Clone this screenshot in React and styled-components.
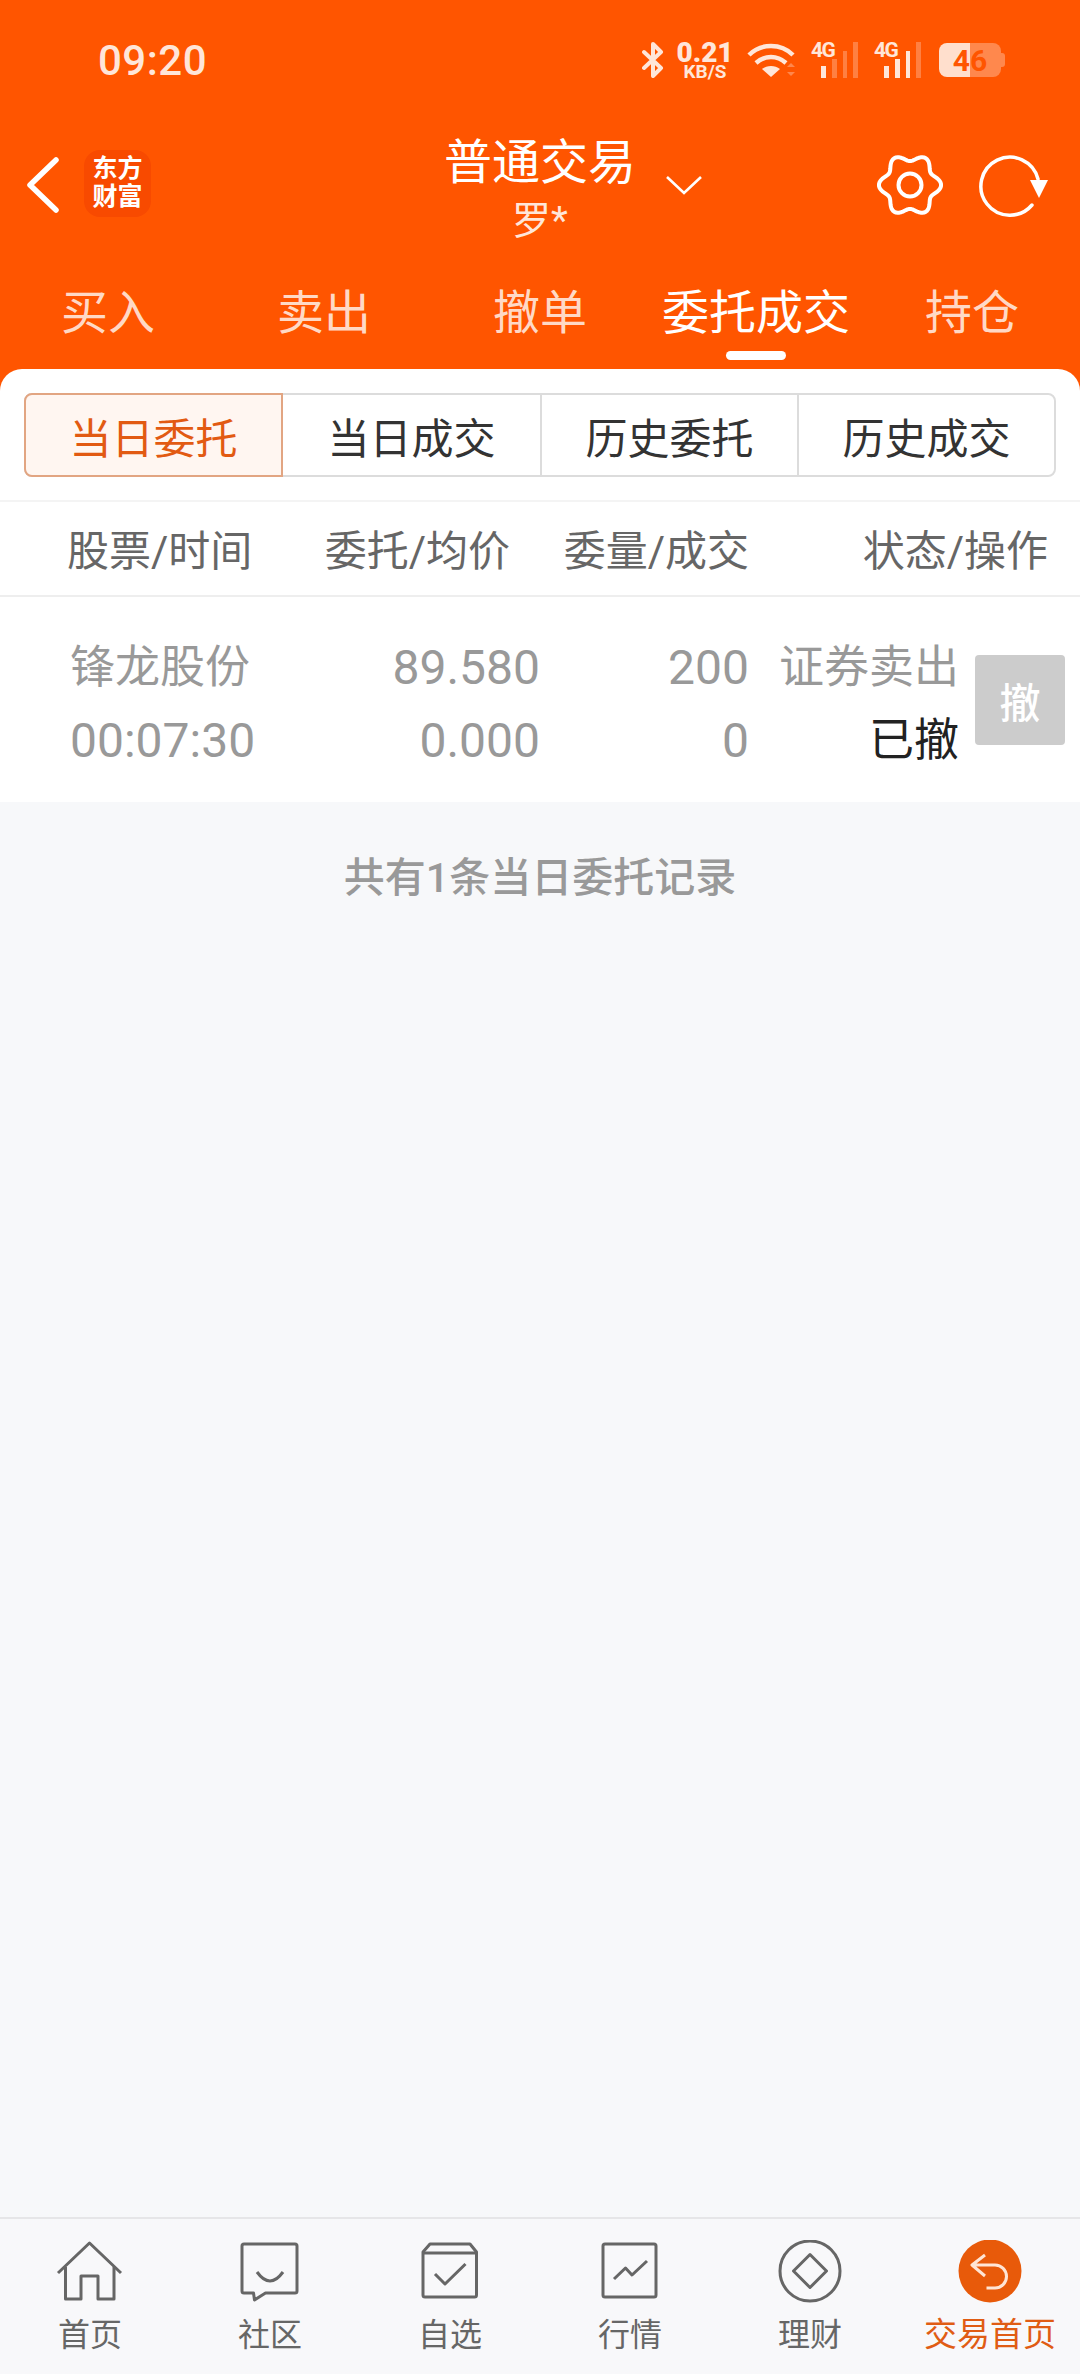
import React from 'react';
import styled, { createGlobalStyle } from 'styled-components';

const ORANGE = '#ff5500';
const PEACH = '#ffe6d9';

const GlobalStyle = createGlobalStyle`
    html, body {
        margin: 0;
        padding: 0;
        background: #f7f8fa;
    }
    * {
        box-sizing: border-box;
    }
    body {
        font-family: Roboto, "Noto Sans CJK SC", sans-serif;
    }
`;

const Page = styled.div`
    width: 1080px;
    height: 2374px;
    display: flex;
    flex-direction: column;
    background: #f7f8fa;
    overflow: hidden;
`;

const Header = styled.header`
    background: ${ORANGE};
    color: #fff;
`;

const StatusBar = styled.div`
    height: 120px;
    display: flex;
    align-items: center;
    padding: 0 75px 0 98px;
`;

const Clock = styled.div`
    font-size: 42px;
    font-weight: 500;
    color: ${PEACH};
    letter-spacing: 0.5px;
`;

const StatusIcons = styled.div`
    margin-left: auto;
    display: flex;
    align-items: center;
    color: ${PEACH};
`;

const Speed = styled.div`
    width: 50px;
    margin: 0 17px 0 16px;
    display: flex;
    flex-direction: column;
    align-items: center;
    font-weight: 700;
    & > b {
        font-size: 28px;
        line-height: 23px;
    }
    & > span {
        font-size: 19px;
        line-height: 15px;
        white-space: nowrap;
    }
`;

const Signal = styled.div`
    position: relative;
    width: 47px;
    height: 36px;
    margin-left: ${(p) => p.$gap}px;
    padding-left: 10px;
    display: flex;
    align-items: flex-end;
    gap: 6px;
`;

const SignalLabel = styled.span`
    position: absolute;
    left: 0;
    top: -1px;
    font-size: 21px;
    line-height: 18px;
    font-weight: 700;
    letter-spacing: -1.5px;
`;

const SignalBar = styled.i`
    width: 5px;
    height: ${(p) => p.$h}px;
    background: ${PEACH};
    opacity: ${(p) => (p.$on ? 1 : 0.3)};
`;

const Battery = styled.div`
    width: 62px;
    height: 34px;
    margin: 0 4px 0 18px;
    position: relative;
    border-radius: 8px;
    background: linear-gradient(90deg, #ffdfcd 50%, rgba(255, 255, 255, 0.3) 50%);
    color: ${ORANGE};
    font-size: 30px;
    font-weight: 700;
    display: flex;
    align-items: center;
    justify-content: center;
    &::after {
        content: '';
        position: absolute;
        right: -4px;
        top: 10px;
        width: 4px;
        height: 14px;
        border-radius: 0 3px 3px 0;
        background: rgba(255, 255, 255, 0.3);
    }
`;

const NavBar = styled.div`
    height: 130px;
    display: grid;
    grid-template-columns: 1fr auto 1fr;
    align-items: center;
`;

const NavLeft = styled.div`
    display: flex;
    align-items: center;
    padding-left: 25px;
    gap: 23px;
`;

const Logo = styled.div`
    width: 67px;
    height: 67px;
    margin-bottom: 4px;
    border-radius: 16px;
    background: #f84a00;
    font-size: 25px;
    line-height: 28px;
    font-weight: 700;
    text-align: center;
    padding-top: 5px;
`;

const Title = styled.div`
    text-align: center;
    width: 192px;
    padding: 9px 0 1px;
    & > h1 {
        margin: 0;
        font-size: 48px;
        line-height: 60px;
        font-weight: 400;
        white-space: nowrap;
    }
    & > p {
        margin: 3px 0 0;
        font-size: 39px;
        line-height: 50px;
        color: ${PEACH};
    }
`;

const NavRight = styled.div`
    display: flex;
    align-items: center;
`;

const Chevron = styled.svg`
    margin: 0 0 0 29px;
`;

const Actions = styled.div`
    margin-left: auto;
    padding-right: 31px;
    display: flex;
    align-items: center;
    gap: 36px;
`;

const Tabs = styled.nav`
    height: 119px;
    display: grid;
    grid-template-columns: repeat(5, 1fr);
`;

const Tab = styled.div`
    position: relative;
    text-align: center;
    font-size: 47px;
    line-height: 64px;
    padding-top: 31px;
    color: ${(p) => (p.$active ? '#fff' : '#ffd9c6')};
    &::after {
        content: '';
        display: ${(p) => (p.$active ? 'block' : 'none')};
        position: absolute;
        left: 50%;
        bottom: 9px;
        width: 60px;
        height: 9px;
        margin-left: -30px;
        border-radius: 5px;
        background: #fff;
    }
`;

const Main = styled.main`
    flex: 1;
    background: linear-gradient(${ORANGE} 24px, transparent 24px);
`;

const Card = styled.section`
    background: #fff;
    border-radius: 22px 22px 0 0;
`;

const SegmentWrap = styled.div`
    padding: 24px 24px 23px;
`;

const Segments = styled.div`
    height: 84px;
    display: grid;
    grid-template-columns: repeat(4, 1fr);
    border: 2px solid #dcdcdc;
    border-radius: 8px;
`;

const Segment = styled.div`
    margin: ${(p) => (p.$active ? '-2px 0 -2px -2px' : '0')};
    display: flex;
    align-items: center;
    justify-content: center;
    font-size: 42px;
    color: ${(p) => (p.$active ? '#e25a12' : '#333')};
    background: ${(p) => (p.$active ? '#fff6f1' : '#fff')};
    border: ${(p) => (p.$active ? '2px solid #e2a582' : '0')};
    border-left: ${(p) => (p.$active || p.$first ? '' : '2px solid #dcdcdc')};
    border-top-left-radius: ${(p) => (p.$active ? '8px' : '0')};
    border-bottom-left-radius: ${(p) => (p.$active ? '8px' : '0')};
    border-top-right-radius: ${(p) => (p.$last ? '8px' : '0')};
    border-bottom-right-radius: ${(p) => (p.$last ? '8px' : '0')};
`;

const TableHead = styled.div`
    height: 97px;
    padding: 0 0 2px 67px;
    display: grid;
    grid-template-columns: 193px 250px 239px 299px;
    align-items: center;
    border-top: 2px solid #f4f4f4;
    border-bottom: 2px solid #eeeeee;
    font-size: 42px;
    color: #666;
`;

const HeadCell = styled.div`
    text-align: ${(p) => (p.$left ? 'left' : 'right')};
    white-space: nowrap;
`;

const OrderRow = styled.div`
    height: 205px;
    padding-left: 70px;
    display: flex;
    align-items: center;
`;

const OrderCol = styled.div`
    width: ${(p) => p.$w}px;
    text-align: ${(p) => (p.$left ? 'left' : 'right')};
    line-height: 73px;
    color: #999;
    white-space: nowrap;
    padding-top: 8px;
`;

const OrderLine = styled.div`
    height: 73px;
    font-size: ${(p) => (p.$num ? 48 : 45)}px;
    color: ${(p) => (p.$done ? '#222' : '#999')};
`;

const CancelButton = styled.button`
    width: 90px;
    height: 90px;
    margin-left: 16px;
    padding: 0;
    border: 0;
    border-radius: 4px;
    background: #cccccc;
    color: #fff;
    font-family: inherit;
    font-size: 41px;
    font-weight: 500;
`;

const Summary = styled.div`
    text-align: center;
    padding-top: 46px;
    font-size: 41px;
    line-height: 60px;
    font-weight: 500;
    color: #999;
`;

const BottomNav = styled.footer`
    height: 157px;
    display: grid;
    grid-template-columns: repeat(6, 180px);
    background: #f8f8fa;
    border-top: 2px solid #e6e6e8;
`;

const NavItem = styled.div`
    padding-top: 21px;
    display: flex;
    flex-direction: column;
    align-items: center;
    font-size: ${(p) => (p.$active ? 33 : 32)}px;
    line-height: 40px;
    color: ${(p) => (p.$active ? '#e05c14' : '#666')};
    & > svg {
        margin-bottom: 11px;
    }
`;

const gearPath = () => {
    const pts = [];
    for (let i = 0; i < 120; i++) {
        const a = (i / 120) * Math.PI * 2;
        const r = 27.5 + 3.6 * Math.cos(6 * a);
        pts.push(`${(33 + r * Math.cos(a)).toFixed(2)} ${(33 + r * Math.sin(a)).toFixed(2)}`);
    }
    return `M${pts.join('L')}Z`;
};

const BackIcon = () => (
    <svg width="36" height="56" viewBox="0 0 36 56">
        <path d="M31 3 5 28l26 25" fill="none" stroke="#fff" strokeWidth="5.5" strokeLinecap="round" strokeLinejoin="round" />
    </svg>
);

const GearIcon = () => (
    <svg width="66" height="66" viewBox="0 0 66 66">
        <path d={gearPath()} fill="none" stroke="#fff" strokeWidth="4" strokeLinejoin="round" />
        <circle cx="33" cy="33" r="11.5" fill="none" stroke="#fff" strokeWidth="4" />
    </svg>
);

const RefreshIcon = () => (
    <svg width="70" height="64" viewBox="0 0 70 64">
        <path d="M53 52A29 29 0 1 1 59 26" fill="none" stroke="#fff" strokeWidth="3.5" strokeLinecap="round" />
        <path d="M51 27h18l-9 18z" fill="#fff" />
    </svg>
);

const BluetoothIcon = () => (
    <svg width="22" height="36" viewBox="0 0 22 36">
        <path d="M2 10l17 16-8 8V2l8 8L2 26" fill="none" stroke={PEACH} strokeWidth="4" strokeLinejoin="round" strokeLinecap="round" />
    </svg>
);

const WifiIcon = () => (
    <svg width="50" height="36" viewBox="0 0 50 36">
        <g fill="none" stroke={PEACH} strokeWidth="4.5">
            <path d="M2 13C14 1 34 1 46 13" />
            <path d="M9 21c9-8 21-8 30 0" />
        </g>
        <path d="M15 27c5-4 13-4 18 0l-9 8z" fill={PEACH} />
        <path d="M40 25l4-4 4 4zM40 30l4 4 4-4z" fill={PEACH} opacity="0.35" />
    </svg>
);

const HomeIcon = () => (
    <svg width="70" height="64" viewBox="0 0 70 64" fill="none" stroke="#666" strokeWidth="3">
        <path d="M3 33 34.5 3 66 33" strokeLinejoin="round" />
        <path d="M10.5 27v32H26V36h17v23h16V27" strokeLinejoin="round" />
    </svg>
);

const ChatIcon = () => (
    <svg width="70" height="64" viewBox="0 0 70 64" fill="none" stroke="#666" strokeWidth="3" strokeLinejoin="round">
        <path d="M9 4h51a2 2 0 0 1 2 2v45a2 2 0 0 1-2 2H30.5l-11 7-1-7H9a2 2 0 0 1-2-2V6a2 2 0 0 1 2-2z" />
        <path d="M22 32Q35 50 48 32" />
    </svg>
);

const WatchIcon = () => (
    <svg width="70" height="64" viewBox="0 0 70 64" fill="none" stroke="#666" strokeWidth="3" strokeLinejoin="round">
        <path d="M15 4h40l6.5 8v43a2 2 0 0 1-2 2H10a2 2 0 0 1-2-2V12z" />
        <path d="M8 13h53.5" />
        <path d="M20 34l10 10 20.5-20" />
    </svg>
);

const MarketIcon = () => (
    <svg width="70" height="64" viewBox="0 0 70 64" fill="none" stroke="#666" strokeWidth="3" strokeLinejoin="round">
        <rect x="8" y="4" width="53" height="53" rx="2" />
        <path d="M19 39l11.5-11L37 35l15-14" />
    </svg>
);

const FinanceIcon = () => (
    <svg width="70" height="64" viewBox="0 0 70 64" fill="none" stroke="#666" strokeWidth="3" strokeLinejoin="round">
        <circle cx="35" cy="31" r="30" />
        <path d="M35 14.5 51.5 31 35 47.5 18.5 31z" />
    </svg>
);

const TradeIcon = () => (
    <svg width="70" height="64" viewBox="0 0 70 64" fill="none">
        <circle cx="35" cy="31" r="31.5" fill="#e85a0a" />
        <path d="M30 15 17 25l13 11M17 25h23a11.5 11.5 0 0 1 0 23h-8.5" stroke="#ffe5d5" strokeWidth="3" strokeLinejoin="round" />
    </svg>
);

const tabs = ['买入', '卖出', '撤单', '委托成交', '持仓'];
const segments = ['当日委托', '当日成交', '历史委托', '历史成交'];
const navItems = [
    { label: '首页', icon: <HomeIcon /> },
    { label: '社区', icon: <ChatIcon /> },
    { label: '自选', icon: <WatchIcon /> },
    { label: '行情', icon: <MarketIcon /> },
    { label: '理财', icon: <FinanceIcon /> },
    { label: '交易首页', icon: <TradeIcon />, active: true },
];

export default function App() {
    return (
        <Page>
            <GlobalStyle />
            <Header>
                <StatusBar>
                    <Clock>09:20</Clock>
                    <StatusIcons>
                        <BluetoothIcon />
                        <Speed>
                            <b>0.21</b>
                            <span>KB/S</span>
                        </Speed>
                        <WifiIcon />
                        <Signal $gap={14}>
                            <SignalLabel>4G</SignalLabel>
                            <SignalBar $h={12} $on />
                            <SignalBar $h={19} />
                            <SignalBar $h={27} />
                            <SignalBar $h={36} />
                        </Signal>
                        <Signal $gap={16}>
                            <SignalLabel>4G</SignalLabel>
                            <SignalBar $h={12} $on />
                            <SignalBar $h={19} $on />
                            <SignalBar $h={27} $on />
                            <SignalBar $h={36} />
                        </Signal>
                        <Battery>46</Battery>
                    </StatusIcons>
                </StatusBar>
                <NavBar>
                    <NavLeft>
                        <BackIcon />
                        <Logo>
                            东方
                            <br />
                            财富
                        </Logo>
                    </NavLeft>
                    <Title>
                        <h1>普通交易</h1>
                        <p>罗*</p>
                    </Title>
                    <NavRight>
                        <Chevron width="38" height="22" viewBox="0 0 38 22">
                            <path d="M2 3l17 16L36 3" fill="none" stroke="#fff" strokeWidth="2.6" />
                        </Chevron>
                        <Actions>
                            <GearIcon />
                            <RefreshIcon />
                        </Actions>
                    </NavRight>
                </NavBar>
                <Tabs>
                    {tabs.map((t) => (
                        <Tab key={t} $active={t === '委托成交'}>
                            {t}
                        </Tab>
                    ))}
                </Tabs>
            </Header>
            <Main>
                <Card>
                    <SegmentWrap>
                        <Segments>
                            {segments.map((s, i) => (
                                <Segment key={s} $active={i === 0} $first={i === 1} $last={i === 3}>
                                    {s}
                                </Segment>
                            ))}
                        </Segments>
                    </SegmentWrap>
                    <TableHead>
                        <HeadCell $left>股票/时间</HeadCell>
                        <HeadCell>委托/均价</HeadCell>
                        <HeadCell>委量/成交</HeadCell>
                        <HeadCell>状态/操作</HeadCell>
                    </TableHead>
                    <OrderRow>
                        <OrderCol $w={230} $left>
                            <OrderLine>锋龙股份</OrderLine>
                            <OrderLine $num>00:07:30</OrderLine>
                        </OrderCol>
                        <OrderCol $w={240}>
                            <OrderLine $num>89.580</OrderLine>
                            <OrderLine $num>0.000</OrderLine>
                        </OrderCol>
                        <OrderCol $w={209}>
                            <OrderLine $num>200</OrderLine>
                            <OrderLine $num>0</OrderLine>
                        </OrderCol>
                        <OrderCol $w={210}>
                            <OrderLine>证券卖出</OrderLine>
                            <OrderLine $done>已撤</OrderLine>
                        </OrderCol>
                        <CancelButton>撤</CancelButton>
                    </OrderRow>
                </Card>
                <Summary>共有1条当日委托记录</Summary>
            </Main>
            <BottomNav>
                {navItems.map((n) => (
                    <NavItem key={n.label} $active={n.active}>
                        {n.icon}
                        {n.label}
                    </NavItem>
                ))}
            </BottomNav>
        </Page>
    );
}
